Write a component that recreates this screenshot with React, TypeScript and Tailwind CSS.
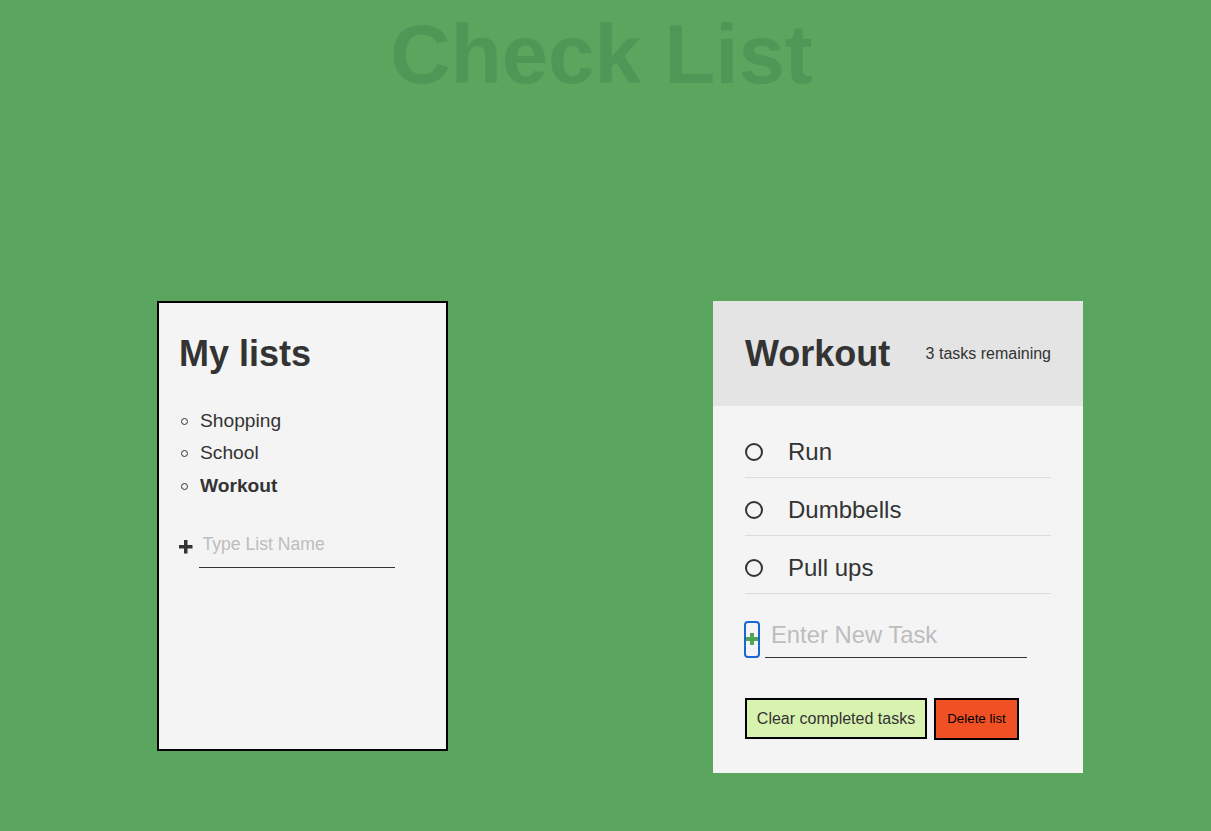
import React from "react";

function Plus({ color, size, stroke }: { color: string; size: number; stroke: number }) {
  const h = size / 2;
  return (
    <svg width={size} height={size} viewBox={`0 0 ${size} ${size}`}>
      <line x1={0} y1={h} x2={size} y2={h} stroke={color} strokeWidth={stroke} />
      <line x1={h} y1={0} x2={h} y2={size} stroke={color} strokeWidth={stroke} />
    </svg>
  );
}

export default function App() {
  const lists = [
    { name: "Shopping", active: false },
    { name: "School", active: false },
    { name: "Workout", active: true },
  ];
  const tasks = ["Run", "Dumbbells", "Pull ups"];
  return (
    <div className="min-h-[831px] bg-[#5ba65f] font-['Liberation_Sans',Arial,sans-serif] text-[#333]">
      <h1 className="pr-[8px] pt-[13px] text-center text-[83.5px] font-bold leading-[83px] text-[#4f9756]">
        Check List
      </h1>
      <div className="mt-[205px] flex items-start gap-[265px] pl-[157px]">
        {/* Left card */}
        <div className="h-[450px] w-[291px] border-2 border-black bg-[#f4f4f4] px-[20px] pt-[33px]">
          <h2 className="text-[36px] font-bold leading-none">My lists</h2>
          <ul className="mt-[33px]">
            {lists.map((l) => (
              <li key={l.name} className="flex h-[32.6px] items-center text-[19.2px]">
                <span className="ml-[2px] mr-[12px] h-[7px] w-[7px] rounded-full border border-[#333]" />
                <span className={l.active ? "font-bold" : ""}>{l.name}</span>
              </li>
            ))}
          </ul>
          <div className="mt-[20px] flex items-center">
            <button className="mr-[6px] mt-[3px] flex items-center">
              <Plus color="#333" size={13.5} stroke={3.5} />
            </button>
            <input
              className="h-[45px] w-[196px] border-b border-[#333] bg-transparent pl-[4px] text-[17.6px] outline-none placeholder:text-[#bdbdbd]"
              placeholder="Type List Name"
            />
          </div>
        </div>

        {/* Right card */}
        <div className="w-[370px] bg-[#f4f4f4]">
          <div className="flex h-[105px] items-center justify-between bg-[#e4e4e4] px-[32px]">
            <h2 className="text-[36px] font-bold leading-none">Workout</h2>
            <p className="text-[16px]">3 tasks remaining</p>
          </div>
          <div className="px-[32px] pb-[33px] pt-[14px]">
            {tasks.map((t) => (
              <div key={t} className="flex h-[58px] items-center border-b border-[#dcdcdc] pt-[7px]">
                <span className="h-[18px] w-[18px] rounded-full border-2 border-[#333]" />
                <span className="ml-[25px] text-[24px]">{t}</span>
              </div>
            ))}
            <div className="mt-[19px] flex items-end">
              <button className="-ml-[1px] flex h-[37px] w-[16px] items-center justify-center rounded-[4px] border-2 border-[#1a66d2] pb-[2px]">
                <Plus color="#4fa553" size={12} stroke={4} />
              </button>
              <input
                className="ml-[5px] h-[45px] w-[262px] border-b border-[#333] bg-transparent pl-[6px] text-[23.8px] outline-none placeholder:text-[#bdbdbd]"
                placeholder="Enter New Task"
              />
            </div>
            <div className="mt-[40px] flex items-start gap-[7px]">
              <button className="flex h-[41px] w-[182px] items-center justify-center border-2 border-black bg-[#d8f2b0] text-[16px] text-[#333]">
                Clear completed tasks
              </button>
              <button className="flex h-[42px] w-[85px] items-center justify-center border-2 border-black bg-[#f15025] text-[13.33px] text-black">
                Delete list
              </button>
            </div>
          </div>
        </div>
      </div>
    </div>
  );
}
